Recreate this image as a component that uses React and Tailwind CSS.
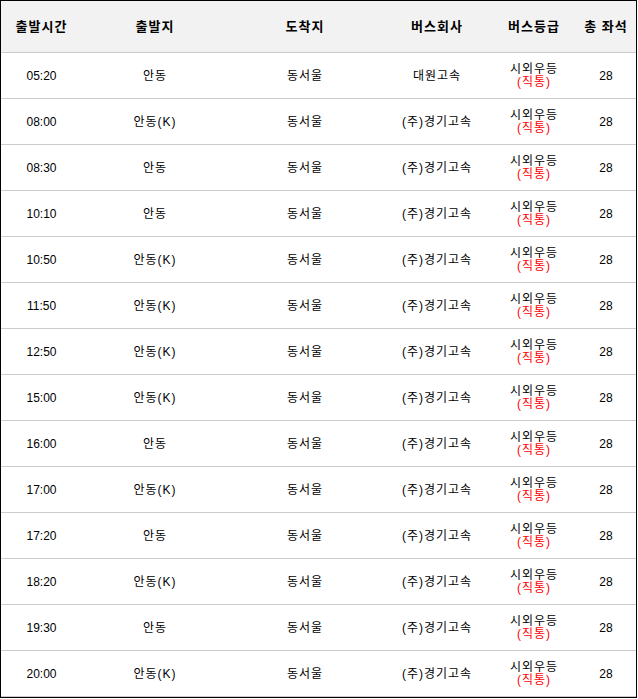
const rows = [
  ['05:20', '안동', '동서울', '대원고속'],
  ['08:00', '안동(K)', '동서울', '(주)경기고속'],
  ['08:30', '안동', '동서울', '(주)경기고속'],
  ['10:10', '안동', '동서울', '(주)경기고속'],
  ['10:50', '안동(K)', '동서울', '(주)경기고속'],
  ['11:50', '안동(K)', '동서울', '(주)경기고속'],
  ['12:50', '안동(K)', '동서울', '(주)경기고속'],
  ['15:00', '안동(K)', '동서울', '(주)경기고속'],
  ['16:00', '안동', '동서울', '(주)경기고속'],
  ['17:00', '안동(K)', '동서울', '(주)경기고속'],
  ['17:20', '안동', '동서울', '(주)경기고속'],
  ['18:20', '안동(K)', '동서울', '(주)경기고속'],
  ['19:30', '안동', '동서울', '(주)경기고속'],
  ['20:00', '안동(K)', '동서울', '(주)경기고속'],
]

const headers = ['출발시간', '출발지', '도착지', '버스회사', '버스등급', '총 좌석']

const cols = 'grid grid-cols-[81px_146px_154px_110px_84px_60px]'

const App = () => {
  return (
    <div
      className="w-[637px] h-[698px] border border-black bg-white text-black"
      style={{ fontFamily: '"Liberation Sans", "Noto Sans CJK KR", sans-serif' }}
    >
      <div className={`${cols} h-[52px] bg-[#f2f2f2] border-b border-[#cccccc]`}>
        {headers.map((h) => (
          <div key={h} className="flex items-center justify-center text-[13px] font-bold tracking-[1px]">
            {h}
          </div>
        ))}
      </div>
      {rows.map(([time, from, to, company]) => (
        <div key={time} className={`${cols} h-[46px] border-b border-[#cccccc] text-[12px]`}>
          <div className="flex items-center justify-center">{time}</div>
          <div className="flex items-center justify-center tracking-[1px]">{from}</div>
          <div className="flex items-center justify-center tracking-[1px]">{to}</div>
          <div className="flex items-center justify-center tracking-[1px]">{company}</div>
          <div className="flex flex-col items-center justify-center leading-[13px] tracking-[1px]">
            <span>시외우등</span>
            <span className="text-[#ff0000]">(직통)</span>
          </div>
          <div className="flex items-center justify-center">28</div>
        </div>
      ))}
    </div>
  )
}

export default App
